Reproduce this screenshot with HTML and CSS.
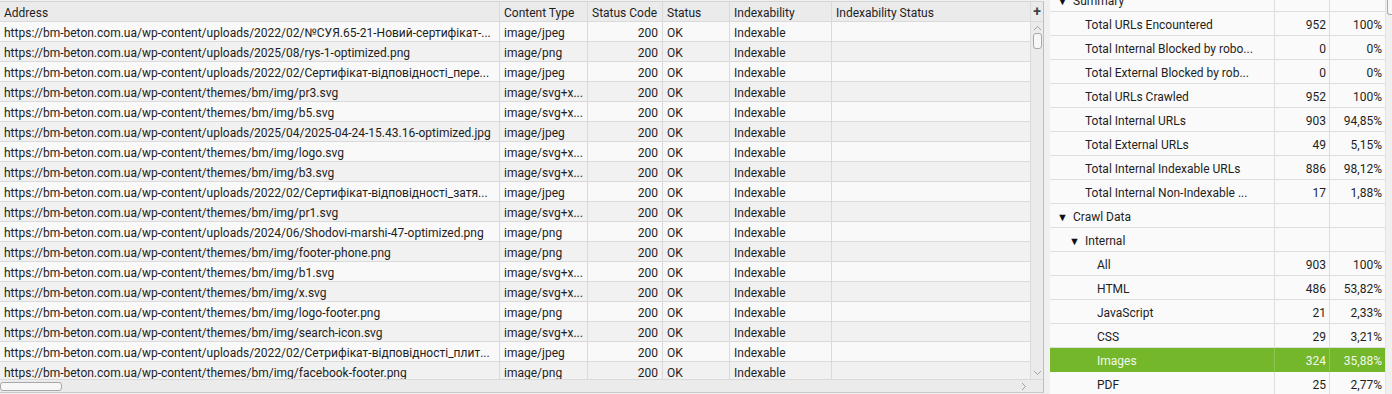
FILE: index.html
```html
<!DOCTYPE html>
<html>
<head>
<meta charset="utf-8">
<link rel="stylesheet" href="styles.css">
</head>
<body>
<div class="app">
  <div class="left">
    <div class="grid-wrap">
      <div class="table">
        <div class="row head">
          <div class="c addr">Address</div>
          <div class="c ctype">Content Type</div>
          <div class="c scode">Status Code</div>
          <div class="c status">Status</div>
          <div class="c idx">Indexability</div>
          <div class="c idxs">Indexability Status</div>
        </div>
        <div class="body">
          <div class="row"><div class="c addr">https://bm-beton.com.ua/wp-content/uploads/2022/02/№СУЯ.65-21-Новий-сертифікат-...</div><div class="c ctype">image/jpeg</div><div class="c scode num">200</div><div class="c status">OK</div><div class="c idx">Indexable</div><div class="c idxs"></div></div>
          <div class="row"><div class="c addr">https://bm-beton.com.ua/wp-content/uploads/2025/08/rys-1-optimized.png</div><div class="c ctype">image/png</div><div class="c scode num">200</div><div class="c status">OK</div><div class="c idx">Indexable</div><div class="c idxs"></div></div>
          <div class="row"><div class="c addr">https://bm-beton.com.ua/wp-content/uploads/2022/02/Сертифікат-відповідності_пере...</div><div class="c ctype">image/jpeg</div><div class="c scode num">200</div><div class="c status">OK</div><div class="c idx">Indexable</div><div class="c idxs"></div></div>
          <div class="row"><div class="c addr">https://bm-beton.com.ua/wp-content/themes/bm/img/pr3.svg</div><div class="c ctype">image/svg+x...</div><div class="c scode num">200</div><div class="c status">OK</div><div class="c idx">Indexable</div><div class="c idxs"></div></div>
          <div class="row"><div class="c addr">https://bm-beton.com.ua/wp-content/themes/bm/img/b5.svg</div><div class="c ctype">image/svg+x...</div><div class="c scode num">200</div><div class="c status">OK</div><div class="c idx">Indexable</div><div class="c idxs"></div></div>
          <div class="row"><div class="c addr">https://bm-beton.com.ua/wp-content/uploads/2025/04/2025-04-24-15.43.16-optimized.jpg</div><div class="c ctype">image/jpeg</div><div class="c scode num">200</div><div class="c status">OK</div><div class="c idx">Indexable</div><div class="c idxs"></div></div>
          <div class="row"><div class="c addr">https://bm-beton.com.ua/wp-content/themes/bm/img/logo.svg</div><div class="c ctype">image/svg+x...</div><div class="c scode num">200</div><div class="c status">OK</div><div class="c idx">Indexable</div><div class="c idxs"></div></div>
          <div class="row"><div class="c addr">https://bm-beton.com.ua/wp-content/themes/bm/img/b3.svg</div><div class="c ctype">image/svg+x...</div><div class="c scode num">200</div><div class="c status">OK</div><div class="c idx">Indexable</div><div class="c idxs"></div></div>
          <div class="row"><div class="c addr">https://bm-beton.com.ua/wp-content/uploads/2022/02/Сертифікат-відповідності_затя...</div><div class="c ctype">image/jpeg</div><div class="c scode num">200</div><div class="c status">OK</div><div class="c idx">Indexable</div><div class="c idxs"></div></div>
          <div class="row"><div class="c addr">https://bm-beton.com.ua/wp-content/themes/bm/img/pr1.svg</div><div class="c ctype">image/svg+x...</div><div class="c scode num">200</div><div class="c status">OK</div><div class="c idx">Indexable</div><div class="c idxs"></div></div>
          <div class="row"><div class="c addr">https://bm-beton.com.ua/wp-content/uploads/2024/06/Shodovi-marshi-47-optimized.png</div><div class="c ctype">image/png</div><div class="c scode num">200</div><div class="c status">OK</div><div class="c idx">Indexable</div><div class="c idxs"></div></div>
          <div class="row"><div class="c addr">https://bm-beton.com.ua/wp-content/themes/bm/img/footer-phone.png</div><div class="c ctype">image/png</div><div class="c scode num">200</div><div class="c status">OK</div><div class="c idx">Indexable</div><div class="c idxs"></div></div>
          <div class="row"><div class="c addr">https://bm-beton.com.ua/wp-content/themes/bm/img/b1.svg</div><div class="c ctype">image/svg+x...</div><div class="c scode num">200</div><div class="c status">OK</div><div class="c idx">Indexable</div><div class="c idxs"></div></div>
          <div class="row"><div class="c addr">https://bm-beton.com.ua/wp-content/themes/bm/img/x.svg</div><div class="c ctype">image/svg+x...</div><div class="c scode num">200</div><div class="c status">OK</div><div class="c idx">Indexable</div><div class="c idxs"></div></div>
          <div class="row"><div class="c addr">https://bm-beton.com.ua/wp-content/themes/bm/img/logo-footer.png</div><div class="c ctype">image/png</div><div class="c scode num">200</div><div class="c status">OK</div><div class="c idx">Indexable</div><div class="c idxs"></div></div>
          <div class="row"><div class="c addr">https://bm-beton.com.ua/wp-content/themes/bm/img/search-icon.svg</div><div class="c ctype">image/svg+x...</div><div class="c scode num">200</div><div class="c status">OK</div><div class="c idx">Indexable</div><div class="c idxs"></div></div>
          <div class="row"><div class="c addr">https://bm-beton.com.ua/wp-content/uploads/2022/02/Сетрифікат-відповідності_плит...</div><div class="c ctype">image/jpeg</div><div class="c scode num">200</div><div class="c status">OK</div><div class="c idx">Indexable</div><div class="c idxs"></div></div>
          <div class="row"><div class="c addr">https://bm-beton.com.ua/wp-content/themes/bm/img/facebook-footer.png</div><div class="c ctype">image/png</div><div class="c scode num">200</div><div class="c status">OK</div><div class="c idx">Indexable</div><div class="c idxs"></div></div>
        </div>
      </div>
      <div class="vscroll">
        <div class="plus">+</div>
        <div class="vtrack">
          <svg class="arrow-up" width="9" height="6" viewBox="0 0 9 6"><path d="M1 5 L4.5 1.5 L8 5" fill="none" stroke="#a0a0a0" stroke-width="1"/></svg>
          <div class="vthumb"></div>
          <div class="vspace"></div>
          <svg class="arrow-down" width="9" height="6" viewBox="0 0 9 6"><path d="M1 1 L4.5 4.5 L8 1" fill="none" stroke="#a0a0a0" stroke-width="1"/></svg>
        </div>
      </div>
    </div>
    <div class="hbar">
      <div class="htrack">
        <div class="hthumb"></div>
        <svg class="arrow-right" width="6" height="9" viewBox="0 0 6 9"><path d="M1 1 L4.5 4.5 L1 8" fill="none" stroke="#a0a0a0" stroke-width="1"/></svg>
      </div>
      <div class="corner"></div>
    </div>
  </div>
  <div class="splitter"></div>
  <div class="right">
    <div class="tree">
      <div class="trow"><div class="tc name l1"><span class="tri">▼</span>Summary</div><div class="tc n"></div><div class="tc p"></div></div>
      <div class="trow"><div class="tc name l2">Total URLs Encountered</div><div class="tc n">952</div><div class="tc p">100%</div></div>
      <div class="trow"><div class="tc name l2">Total Internal Blocked by robo...</div><div class="tc n">0</div><div class="tc p">0%</div></div>
      <div class="trow"><div class="tc name l2">Total External Blocked by rob...</div><div class="tc n">0</div><div class="tc p">0%</div></div>
      <div class="trow"><div class="tc name l2">Total URLs Crawled</div><div class="tc n">952</div><div class="tc p">100%</div></div>
      <div class="trow"><div class="tc name l2">Total Internal URLs</div><div class="tc n">903</div><div class="tc p">94,85%</div></div>
      <div class="trow"><div class="tc name l2">Total External URLs</div><div class="tc n">49</div><div class="tc p">5,15%</div></div>
      <div class="trow"><div class="tc name l2">Total Internal Indexable URLs</div><div class="tc n">886</div><div class="tc p">98,12%</div></div>
      <div class="trow"><div class="tc name l2">Total Internal Non-Indexable ...</div><div class="tc n">17</div><div class="tc p">1,88%</div></div>
      <div class="trow"><div class="tc name l1"><span class="tri">▼</span>Crawl Data</div><div class="tc n"></div><div class="tc p"></div></div>
      <div class="trow"><div class="tc name l2b"><span class="tri">▼</span>Internal</div><div class="tc n"></div><div class="tc p"></div></div>
      <div class="trow"><div class="tc name l3">All</div><div class="tc n">903</div><div class="tc p">100%</div></div>
      <div class="trow"><div class="tc name l3">HTML</div><div class="tc n">486</div><div class="tc p">53,82%</div></div>
      <div class="trow"><div class="tc name l3">JavaScript</div><div class="tc n">21</div><div class="tc p">2,33%</div></div>
      <div class="trow"><div class="tc name l3">CSS</div><div class="tc n">29</div><div class="tc p">3,21%</div></div>
      <div class="trow sel"><div class="tc name l3">Images</div><div class="tc n">324</div><div class="tc p">35,88%</div></div>
      <div class="trow"><div class="tc name l3">PDF</div><div class="tc n">25</div><div class="tc p">2,77%</div></div>
    </div>
    <div class="rscroll"><div class="rthumb"></div></div>
  </div>
</div>
</body>
</html>
```

FILE: styles.css
```css
* { box-sizing: border-box; }
html, body { margin: 0; padding: 0; }
body {
  width: 1392px;
  height: 394px;
  overflow: hidden;
  background: #f0f0f0;
  font-family: Roboto, "Noto Sans", "Liberation Sans", sans-serif;
  font-size: 12px;
  color: #1e1e1e;
}
.app {
  display: flex;
  height: 394px;
}
.left {
  width: 1044px;
  flex: none;
  margin-top: 1px;
  height: 392px;
  border-top: 1px solid #d4d4d4;
  border-bottom: 1px solid #c8c8c8;
  border-right: 1px solid #bdbdbd;
  display: flex;
  flex-direction: column;
  background: #f0f0f0;
}
.grid-wrap {
  display: flex;
  height: 377px;
  flex: none;
}
.table {
  width: 1030px;
  flex: none;
  display: flex;
  flex-direction: column;
  overflow: hidden;
}
.row {
  display: flex;
  height: 20px;
  flex: none;
  border-bottom: 1px solid #dadada;
  white-space: nowrap;
}
.row.head { background: #ebebeb; }
.body { flex: 1; overflow: hidden; }
.body .row:nth-child(odd) { background: #f9f9f9; }
.body .row:nth-child(even) { background: #f1f1f1; }
.c {
  overflow: hidden;
  padding: 2px 4px 0;
  line-height: 19px;
  border-right: 1px solid #dadada;
  flex: none;
}
.c.addr { width: 500px; }
.c.ctype { width: 88px; }
.c.scode { width: 75px; }
.c.status { width: 67px; }
.c.idx { width: 102px; }
.c.idxs { width: 198px; border-right: none; }
.c.num { text-align: right; }
.head .c.scode { text-align: left; }
.vscroll {
  width: 13px;
  flex: none;
  display: flex;
  flex-direction: column;
}
.plus {
  height: 20px;
  flex: none;
  background: #ebebeb;
  border-left: 1px solid #dadada;
  border-bottom: 1px solid #dadada;
  text-align: center;
  font-weight: bold;
  font-size: 14px;
  line-height: 19px;
  color: #444;
}
.vtrack {
  flex: 1;
  background: #ebebeb;
  border-left: 1px solid #dadada;
  display: flex;
  flex-direction: column;
  align-items: center;
  padding-top: 3px;
}
.arrow-up, .arrow-down { display: block; flex: none; }
.vthumb {
  width: 9px;
  height: 16px;
  margin-top: 2px;
  border: 1px solid #a8a8a8;
  border-radius: 3px;
  background: #f7f7f7;
  flex: none;
}
.vspace { flex: 1; }
.arrow-down { margin-bottom: 3px; }
.hbar {
  display: flex;
  height: 13px;
  flex: none;
}
.htrack {
  width: 1030px;
  background: #ebebeb;
  border-top: 1px solid #dadada;
  display: flex;
  align-items: center;
  justify-content: space-between;
  padding-right: 3px;
}
.hthumb {
  width: 62px;
  height: 9px;
  border: 1px solid #a8a8a8;
  border-radius: 3px;
  background: #f7f7f7;
}
.corner { width: 13px; background: #ebebeb; border-top: 1px solid #dadada; }
.splitter { width: 6px; flex: none; }
.right {
  flex: 1;
  display: flex;
  background: #fafafa;
  overflow: hidden;
}
.tree {
  width: 335px;
  flex: none;
  margin-top: -12px;
}
.trow {
  display: flex;
  height: 24px;
  border-bottom: 1px solid #dedede;
  white-space: nowrap;
}
.tc {
  flex: none;
  overflow: hidden;
  padding-top: 2px;
  line-height: 23px;
}
.tc.name { width: 225px; border-right: 1px solid #dedede; }
.tc.n { width: 55px; text-align: right; padding-right: 3px; border-right: 1px solid #dedede; }
.tc.p { width: 55px; text-align: right; padding-right: 3px; }
.tri { display: inline-block; width: 16px; font-size: 11px; color: #111; vertical-align: top; }
.l1 { padding-left: 7px; }
.l2 { padding-left: 35px; }
.l2b { padding-left: 19px; }
.l3 { padding-left: 47px; }
.trow.sel { background: #74b72b; color: #f2f8ea; border-bottom-color: #74b72b; }
.trow.sel .tc { border-right-color: #8cc652; }
.rscroll {
  flex: 1;
  background: #f0f0f0;
  border-left: 1px solid #e4e4e4;
}
.rthumb {
  margin-left: 1px;
  width: 8px;
  height: 15px;
  border: 1px solid #a8a8a8;
  border-top: none;
  border-radius: 0 0 3px 3px;
  background: #f7f7f7;
}
```
